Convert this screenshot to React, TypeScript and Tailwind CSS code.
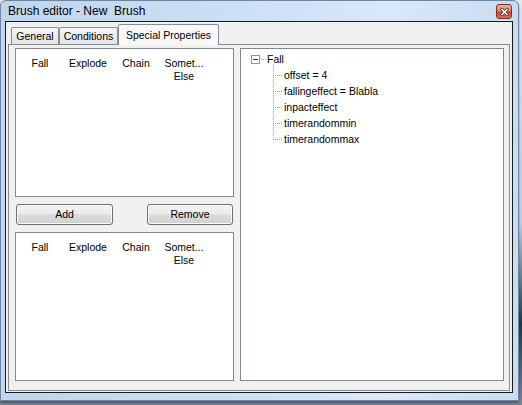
import React from "react";

const FONT = { fontFamily: '"Liberation Sans", Arial, sans-serif' };

function ListItems() {
  return (
    <div className="flex pt-[8px] text-[10.5px] leading-[13px] text-black">
      <div className="w-[48px] text-center">Fall</div>
      <div className="w-[48px] text-center">Explode</div>
      <div className="w-[48px] text-center">Chain</div>
      <div className="w-[48px] text-center">
        Somet...
        <br />
        Else
      </div>
    </div>
  );
}

function Dots({ x1, y1, x2, y2 }: { x1: number; y1: number; x2: number; y2: number }) {
  const pts: React.ReactNode[] = [];
  if (y1 === y2) {
    for (let x = x1; x <= x2; x += 2) pts.push(<rect key={x} x={x} y={y1} width={1} height={1} />);
  } else {
    for (let y = y1; y <= y2; y += 2) pts.push(<rect key={y} x={x1} y={y} width={1} height={1} />);
  }
  return <>{pts}</>;
}

function Tree() {
  const children = ["offset = 4", "fallingeffect = Blabla", "inpacteffect", "timerandommin", "timerandommax"];
  return (
    <div className="relative w-[264px] h-[333px] border border-[#828790] bg-white">
      <svg className="absolute left-0 top-0" width="262" height="120" shapeRendering="crispEdges">
        <g fill="#a0a0a0">
          <Dots x1={20} y1={10} x2={24} y2={10} />
          <Dots x1={32} y1={16} x2={32} y2={90} />
          {[26, 42, 58, 74, 90].map((y) => (
            <Dots key={y} x1={34} y1={y} x2={41} y2={y} />
          ))}
        </g>
        <rect x="10.5" y="6.5" width="8" height="8" fill="#ffffff" stroke="#919191" />
        <rect x="12" y="10" width="5" height="1" fill="#1c3f94" />
      </svg>
      <div className="pt-[2px] text-[10.5px] leading-[16px] text-black">
        <div className="h-[16px] pl-[26px]">Fall</div>
        {children.map((c) => (
          <div key={c} className="h-[16px] pl-[43px]">
            {c}
          </div>
        ))}
      </div>
    </div>
  );
}

function Button({ label, w }: { label: string; w: string }) {
  return (
    <div
      className={`${w} h-[21px] rounded-[3px] border border-[#707070] bg-[linear-gradient(#f2f2f2_0%,#ebebeb_50%,#dddddd_50%,#cfcfcf_100%)] shadow-[inset_0_0_0_1px_#fbfbfb] flex items-center justify-center text-[10.5px] text-black`}
    >
      {label}
    </div>
  );
}

export default function App() {
  return (
    <div
      className="w-[522px] h-[405px] overflow-hidden bg-[linear-gradient(#e4e9ee_0%,#c9d0d8_55%,#2b3646_80%,#7f8790_100%)]"
      style={FONT}
    >
      <div className="w-[519px] h-[401px] rounded-t-[6px] border border-[#6d86a3] bg-[linear-gradient(to_right,#bfd5ed_0%,#cfe2f6_55%,#d8e8f8_75%,#c8ddf2_100%)] flex flex-col pl-[4px] pr-[5px] pb-[7px] shadow-[0_2px_3px_rgba(0,0,0,0.35)]">
        {/* title bar */}
        <div className="h-[20px] flex items-start justify-between">
          <div className="pl-[3px] leading-[20px] text-[12px] text-black whitespace-pre">Brush editor - New  Brush</div>
          <div className="mt-[3px] mr-[1px] w-[16px] h-[15px] rounded-[3px] border border-[#7b3322] bg-[linear-gradient(#eeb3a4_0%,#de8069_45%,#c64a2f_55%,#d97552_100%)] flex items-center justify-center">
            <svg width="9" height="8" viewBox="0 0 9 8">
              <path d="M1 0.5 L8 7.5 M8 0.5 L1 7.5" stroke="#3c2a2a" strokeWidth="3" />
              <path d="M1.5 1 L7.5 7 M7.5 1 L1.5 7" stroke="#ffffff" strokeWidth="1.6" />
            </svg>
          </div>
        </div>
        {/* client */}
        <div className="flex-1 border border-[#1a1a1a] bg-[#f0f0f0] flex flex-col pl-[2px] pr-[2px] pt-[2px] pb-[1px]">
          {/* tabs */}
          <div className="h-[20px] flex items-end pl-[3px] text-[10.5px] text-black">
            <div className="w-[48px] h-[17px] border border-b-0 border-[#898c95] rounded-t-[2px] bg-[linear-gradient(#f5f5f5,#e4e4e4)] flex items-center justify-center pt-[1px]">
              General
            </div>
            <div className="w-[59px] h-[17px] border border-b-0 border-[#898c95] rounded-t-[2px] bg-[linear-gradient(#f5f5f5,#e4e4e4)] flex items-center justify-center pt-[1px]">
              Conditions
            </div>
            <div className="relative z-10 -mb-px w-[101px] h-[21px] border border-b-0 border-[#898c95] rounded-t-[2px] bg-[#f8f8f8] flex items-start justify-center pt-[3px]">
              Special Properties
            </div>
          </div>
          {/* panel */}
          <div className="flex-1 border border-[#898c95] bg-[#f0f0f0] flex pl-[6px] pr-[5px] pt-[3px] pb-[9px] gap-[6px]">
            <div className="w-[219px] flex flex-col gap-[7px]">
              <div className="h-[149px] border border-[#828790] bg-white">
                <ListItems />
              </div>
              <div className="h-[21px] flex justify-between px-[1px]">
                <Button label="Add" w="w-[97px]" />
                <Button label="Remove" w="w-[86px]" />
              </div>
              <div className="h-[149px] border border-[#828790] bg-white">
                <ListItems />
              </div>
            </div>
            <Tree />
          </div>
        </div>
      </div>
    </div>
  );
}
